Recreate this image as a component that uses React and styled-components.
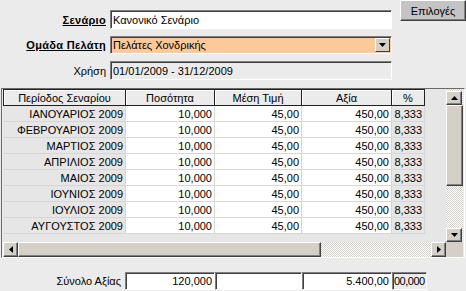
import React from 'react'
import styled, { createGlobalStyle } from "styled-components";

const GlobalStyle = createGlobalStyle`
    * { box-sizing: border-box; }
    body {
        margin: 0;
        background: #ebebeb;
        font-family: "Liberation Sans", Arial, sans-serif;
        font-size: 11px;
        color: #000;
    }
`;

const Page = styled.div`
    width: 466px;
    height: 291px;
    overflow: hidden;
    background: #ebebeb;
`;

const Top = styled.div`
    display: flex;
    height: 88px;
`;

const Form = styled.div`
    display: grid;
    grid-template-columns: 106px 282px;
    grid-template-rows: 19px 18px 19px;
    column-gap: 4px;
    row-gap: 7px;
    padding-top: 10px;
    width: 398px;
`;

const Label = styled.div`
    align-self: center;
    text-align: right;
    font-weight: ${p => (p.$bold ? "bold" : "normal")};
    text-decoration: ${p => (p.$bold ? "underline" : "none")};
    letter-spacing: ${p => (p.$bold ? "0.3px" : "0")};
    white-space: nowrap;
`;

const Field = styled.div`
    position: relative;
    display: flex;
    align-items: center;
    padding-left: 2px;
    background: ${p => p.$bg || "#fff"};
    border-top: 1px solid #808080;
    border-left: 1px solid #808080;
    border-bottom: 1px solid #fff;
    border-right: 1px solid #fff;
    box-shadow: inset 1px 1px 0 #404040;
    white-space: nowrap;
    overflow: hidden;
`;

const DropButton = styled.div`
    position: absolute;
    right: 1px;
    top: 1px;
    bottom: 1px;
    width: 15px;
    background: #d4d0c8;
    border-top: 1px solid #fff;
    border-left: 1px solid #fff;
    border-right: 1px solid #404040;
    border-bottom: 1px solid #404040;
    display: flex;
    align-items: center;
    justify-content: center;
`;

const OptionsButton = styled.div`
    margin-left: 2px;
    width: 66px;
    height: 21px;
    display: flex;
    align-items: center;
    justify-content: center;
    background: #c4c4c4;
    border-top: 1px solid #fff;
    border-left: 1px solid #fff;
    border-right: 1px solid #404040;
    border-bottom: 1px solid #404040;
    box-shadow: inset -1px -1px 0 #808080;
`;

const GridFrame = styled.div`
    margin-left: 1px;
    width: 464px;
    height: 170px;
    border-top: 1px solid #6a6a6a;
    border-left: 1px solid #6a6a6a;
    border-right: 1px solid #fff;
    border-bottom: 1px solid #fff;
    padding: 0 1px 0 1px;
    display: grid;
    grid-template-columns: 443px 17px;
    grid-template-rows: 153px 15px;
`;

const TableArea = styled.div`
    background: #e6e6e6;
    overflow: hidden;
`;

const HeaderRow = styled.div`
    display: grid;
    grid-template-columns: 123px 89px 87px 90px 33px;
    height: 17px;
`;

const HeaderCell = styled.div`
    display: flex;
    align-items: center;
    justify-content: center;
    background: #ebebeb;
    border: 1px solid #202020;
    border-left: ${p => (p.$first ? "1px solid #202020" : "none")};
    box-shadow: inset 1px 1px 0 #fff;
    white-space: nowrap;
    overflow: hidden;
`;

const Row = styled.div`
    display: grid;
    grid-template-columns: 123px 89px 87px 90px 33px;
    height: 16px;
`;

const Cell = styled.div`
    display: flex;
    align-items: center;
    justify-content: flex-end;
    padding-right: 2px;
    background: ${p => (p.$fixed ? "#e6e6e6" : "#fff")};
    border-bottom: 1px solid #d6d6d6;
    border-right: 1px solid #d6d6d6;
    white-space: nowrap;
    overflow: hidden;
`;

const checker = `
    background-color: #f4f4f4;
    background-image: repeating-conic-gradient(#d4d0c8 0 25%, #ffffff 0 50%);
    background-size: 2px 2px;
`;

const VScroll = styled.div`
    display: flex;
    flex-direction: column;
    padding-top: 2px;
    ${checker}
`;

const HScroll = styled.div`
    display: flex;
    ${checker}
`;

const Corner = styled.div`
    background: #d4d0c8;
`;

const ArrowButton = styled.div`
    width: ${p => p.$w || 16}px;
    height: ${p => p.$h || 15}px;
    flex: none;
    background: #d4d0c8;
    border-top: 1px solid #fff;
    border-left: 1px solid #fff;
    border-right: 1px solid #404040;
    border-bottom: 1px solid #404040;
    box-shadow: inset -1px -1px 0 #808080;
    display: flex;
    align-items: center;
    justify-content: center;
`;

const Thumb = styled.div`
    flex: none;
    width: ${p => (p.$w ? p.$w + "px" : "100%")};
    height: ${p => (p.$h ? p.$h + "px" : "100%")};
    background: #d4d0c8;
    border-top: 1px solid #fff;
    border-left: 1px solid #fff;
    border-right: 1px solid #404040;
    border-bottom: 1px solid #404040;
    box-shadow: inset -1px -1px 0 #808080;
`;

const Spacer = styled.div`
    flex: 1;
`;

const Footer = styled.div`
    display: flex;
    margin-top: 14px;
    height: 18px;
`;

const FooterLabel = styled.div`
    width: 122px;
    padding-right: 1px;
    text-align: right;
    align-self: center;
    margin-right: 3px;
`;

const SumField = styled(Field)`
    width: ${p => p.$w}px;
    justify-content: ${p => (p.$left ? "flex-start" : "flex-end")};
    padding-right: ${p => (p.$left ? "0" : "2px")};
    padding-left: ${p => (p.$left ? "1px" : "0")};
    letter-spacing: ${p => (p.$left ? "-0.5px" : "0")};
`;

const Tri = ({ dir }) => {
    const pts = {
        up: "0,4 7,4 3.5,0",
        down: "0,0 7,0 3.5,4",
        left: "4,0 4,7 0,3.5",
        right: "0,0 0,7 4,3.5",
    }[dir];
    const vertical = dir === "up" || dir === "down";
    return (
        <svg width={vertical ? 7 : 4} height={vertical ? 4 : 7} viewBox={vertical ? "0 0 7 4" : "0 0 4 7"}>
            <polygon points={pts} fill="#000" />
        </svg>
    );
};

const months = [
    "ΙΑΝΟΥΑΡΙΟΣ 2009",
    "ΦΕΒΡΟΥΑΡΙΟΣ 2009",
    "ΜΑΡΤΙΟΣ 2009",
    "ΑΠΡΙΛΙΟΣ 2009",
    "ΜΑΙΟΣ 2009",
    "ΙΟΥΝΙΟΣ 2009",
    "ΙΟΥΛΙΟΣ 2009",
    "ΑΥΓΟΥΣΤΟΣ 2009",
];

const App = () => {
    return (
        <Page>
            <GlobalStyle />
            <Top>
                <Form>
                    <Label $bold>Σενάριο</Label>
                    <Field>Κανονικό Σενάριο</Field>
                    <Label $bold>Ομάδα Πελάτη</Label>
                    <Field $bg="#fec998">
                        Πελάτες Χονδρικής
                        <DropButton><Tri dir="down" /></DropButton>
                    </Field>
                    <Label>Χρήση</Label>
                    <Field $bg="#ebebeb">01/01/2009 - 31/12/2009</Field>
                </Form>
                <OptionsButton>Επιλογές</OptionsButton>
            </Top>

            <GridFrame>
                <TableArea>
                    <HeaderRow>
                        <HeaderCell $first>Περίοδος Σεναρίου</HeaderCell>
                        <HeaderCell>Ποσότητα</HeaderCell>
                        <HeaderCell>Μέση Τιμή</HeaderCell>
                        <HeaderCell>Αξία</HeaderCell>
                        <HeaderCell>%</HeaderCell>
                    </HeaderRow>
                    {months.map((m, index) => (
                        <Row key={index}>
                            <Cell $fixed>{m}</Cell>
                            <Cell>10,000</Cell>
                            <Cell>45,00</Cell>
                            <Cell>450,00</Cell>
                            <Cell $fixed>8,333</Cell>
                        </Row>
                    ))}
                </TableArea>
                <VScroll>
                    <ArrowButton $h={14}><Tri dir="up" /></ArrowButton>
                    <Thumb $h={81} />
                    <Spacer />
                    <ArrowButton $h={14}><Tri dir="down" /></ArrowButton>
                </VScroll>
                <HScroll>
                    <ArrowButton $w={15}><Tri dir="left" /></ArrowButton>
                    <Thumb $w={303} />
                    <Spacer />
                    <ArrowButton $w={15}><Tri dir="right" /></ArrowButton>
                </HScroll>
                <Corner />
            </GridFrame>

            <Footer>
                <FooterLabel>Σύνολο Αξίας</FooterLabel>
                <SumField $w={90}>120,000</SumField>
                <SumField $w={87}></SumField>
                <SumField $w={90}>5.400,00</SumField>
                <SumField $w={35} $left $bg="#ebebeb">00,000</SumField>
            </Footer>
        </Page>
    )
}

export default App
